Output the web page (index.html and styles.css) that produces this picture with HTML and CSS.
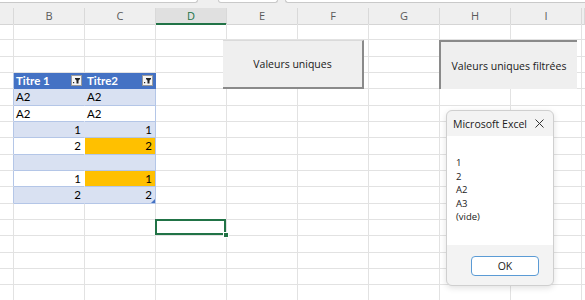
FILE: index.html
```html
<!DOCTYPE html>
<html>
<head>
  <title>Valeurs uniques</title>
  <link rel="stylesheet" href="styles.css">
</head>
<body>
  <div class="window">
    <div class="topbar">
      <div class="tab tab-long"></div>
      <div class="tab tab-short"></div>
      <div class="tab tab-rest"></div>
    </div>
    <div class="colheads" id="colheads"></div>
    <div class="sheet" id="sheet"></div>

    <button class="shape-btn btn-unique">Valeurs uniques</button>
    <button class="shape-btn btn-filtered">Valeurs uniques filtrées</button>

    <div class="msgbox">
      <div class="msg-title">
        <span>Microsoft Excel</span>
        <svg class="msg-close" width="9" height="9" viewBox="0 0 9 9">
          <path d="M0.5 0.5 L8.5 8.5 M8.5 0.5 L0.5 8.5" stroke="#333" stroke-width="1" fill="none"/>
        </svg>
      </div>
      <div class="msg-body">
        <div>1</div>
        <div>2</div>
        <div>A2</div>
        <div>A3</div>
        <div>(vide)</div>
      </div>
      <div class="msg-foot">
        <button class="ok-btn">OK</button>
      </div>
    </div>
  </div>

  <script>
    const letters = ["", "B", "C", "D", "E", "F", "G", "H", "I", ""];
    let head = "";
    letters.forEach((l, i) => {
      const cls = l === "D" ? "colhead current" : "colhead";
      head += `<div class="${cls}">${l}</div>`;
    });
    document.getElementById("colheads").innerHTML = head;

    const filterIcon =
      `<span class="filter"><svg width="9" height="9" viewBox="0 0 9 9">` +
      `<path d="M3 2 H8 V3 L6.5 4.5 V7.5 H4.5 V4.5 L3 3 Z" fill="#222"/>` +
      `<rect x="1" y="6" width="1.2" height="1.2" fill="#222"/></svg></span>`;

    // table rows: [text, class] for columns B and C
    const table = {
      3: [["Titre 1", "t-head"], ["Titre2", "t-head"]],
      4: [["A2", "t-band"], ["A2", "t-band"]],
      5: [["A2", "t-plain"], ["A2", "t-plain"]],
      6: [["1", "t-band num"], ["1", "t-band num"]],
      7: [["2", "t-plain num"], ["2", "t-orange num"]],
      8: [["", "t-band"], ["", "t-band"]],
      9: [["1", "t-plain num"], ["1", "t-orange num"]],
      10: [["2", "t-band num"], ["2", "t-band num t-last"]]
    };

    let html = "";
    for (let r = 0; r < 17; r++) {
      for (let c = 0; c < 10; c++) {
        let cls = "cell";
        let text = "";
        if (table[r] && c === 0) cls += " t-edge";
        if (table[r] && (c === 1 || c === 2)) {
          const [t, k] = table[r][c - 1];
          cls += " " + k;
          text = t;
          if (k === "t-head") text = `<span>${t}</span>` + filterIcon;
          if (c === 2) cls += " t-right";
        }
        if (r === 12 && c === 3) cls += " active";
        html += `<div class="${cls}">${text}</div>`;
      }
    }
    document.getElementById("sheet").innerHTML = html;
  </script>
</body>
</html>
```

FILE: styles.css
```css
body {
  margin: 0;
  font-family: "Open Sans", "Noto Sans", sans-serif;
}
.window {
  position: relative;
  width: 585px;
  height: 300px;
  overflow: hidden;
  background: #fff;
}
.topbar {
  height: 8px;
  background: #efefef;
  display: flex;
  align-items: flex-start;
}
.tab {
  height: 2px;
  background: #fff;
  border: 1px solid #c9c9c9;
  border-top: none;
  border-radius: 0 0 3px 3px;
}
.tab-long {
  width: 197px;
  border-left: none;
  border-radius: 0 0 3px 0;
}
.tab-short {
  margin-left: 20px;
  width: 58px;
}
.tab-rest {
  margin-left: 7px;
  flex: 1;
  border-right: none;
  border-radius: 0 0 0 3px;
}
.colheads,
.sheet {
  display: grid;
  grid-template-columns: 14px repeat(8, 71px) 1fr;
}
.colheads {
  height: 16px;
  background: #efefef;
}
.colhead {
  box-sizing: border-box;
  border-right: 1px solid #d9d9d9;
  border-bottom: 1px solid #d5d5d5;
  text-align: center;
  font-size: 11px;
  line-height: 15px;
  color: #5a5a5a;
}
.colhead.current {
  background: #e0e0e0;
  color: #217346;
  border-bottom: 2px solid #217346;
}
.sheet {
  grid-auto-rows: 16.333px;
}
.cell {
  box-sizing: border-box;
  border-right: 1px solid #e2e2e2;
  border-bottom: 1px solid #e2e2e2;
  padding: 0 2px;
  font-family: "Lato", "Liberation Sans", sans-serif;
  font-size: 11.5px;
  line-height: 15px;
  color: #000;
  white-space: nowrap;
  overflow: hidden;
}
.t-edge {
  border-right-color: #b4c6e7;
}
.t-head {
  background: #4472c4;
  border-color: #4472c4;
  color: #fff;
  font-weight: bold;
  display: flex;
  align-items: center;
  justify-content: space-between;
  padding-right: 2px;
}
.t-band {
  background: #d9e1f2;
  border-right-color: #d9e1f2;
  border-bottom-color: #b4c6e7;
}
.t-plain {
  background: #fff;
  border-right-color: #fff;
  border-bottom-color: #b4c6e7;
}
.t-orange {
  background: #ffc000;
  border-right-color: #ffc000;
  border-bottom-color: #b4c6e7;
}
.t-right {
  border-right-color: #b4c6e7;
}
.t-head.t-right {
  border-right-color: #4472c4;
}
.num {
  text-align: right;
  padding-right: 3px;
}
.t-last {
  position: relative;
  overflow: visible;
}
.t-last::after {
  content: "";
  position: absolute;
  right: 0;
  bottom: 0;
  border-left: 4px solid transparent;
  border-bottom: 4px solid #4472c4;
}
.filter {
  width: 9px;
  height: 9px;
  background: #f4f4f4;
  border: 1px solid #9a9a9a;
  display: flex;
}
.active {
  position: relative;
  overflow: visible;
}
.active::before {
  content: "";
  position: absolute;
  left: -1px;
  top: -1px;
  right: 0;
  bottom: 0;
  border: 2px solid #217346;
}
.active::after {
  content: "";
  position: absolute;
  right: -3px;
  bottom: -3px;
  width: 4px;
  height: 4px;
  background: #217346;
  border: 1px solid #fff;
}
.shape-btn {
  position: absolute;
  top: 40px;
  height: 49px;
  box-sizing: border-box;
  padding: 0;
  border: none;
  background: #efefef;
  font-family: "Open Sans", "Noto Sans", sans-serif;
  font-size: 10.5px;
  color: #1a1a1a;
}
.btn-unique {
  left: 223px;
  width: 141px;
  border-top: 1px solid #dadada;
  border-right: 2px solid #8a8a8a;
  border-bottom: 2px solid #8a8a8a;
}
.btn-filtered {
  left: 439px;
  width: 138px;
  border-top: 2px solid #8a8a8a;
  border-left: 2px solid #8a8a8a;
}
.msgbox {
  position: absolute;
  left: 446px;
  top: 110px;
  width: 108px;
  height: 176px;
  box-sizing: border-box;
  border: 1px solid #cfcfcf;
  border-radius: 6px;
  overflow: hidden;
  background: #f3f3f3;
  box-shadow: 0 2px 6px rgba(0, 0, 0, 0.12);
  display: flex;
  flex-direction: column;
}
.msg-title {
  height: 25px;
  display: flex;
  align-items: center;
  justify-content: space-between;
  padding: 0 9px 0 6px;
  font-size: 10.5px;
  color: #1a1a1a;
}
.msg-body {
  height: 109px;
  box-sizing: border-box;
  background: #fff;
  padding: 20px 0 0 9px;
  font-size: 9.5px;
  line-height: 13.5px;
  color: #1a1a1a;
}
.msg-foot {
  flex: 1;
}
.ok-btn {
  display: block;
  width: 68px;
  height: 20px;
  margin: 11px 0 0 24px;
  padding: 0;
  background: #fff;
  border: 1px solid #5b9bd5;
  border-radius: 4px;
  font-family: "Open Sans", "Noto Sans", sans-serif;
  font-size: 10.5px;
  color: #1a1a1a;
}
```
